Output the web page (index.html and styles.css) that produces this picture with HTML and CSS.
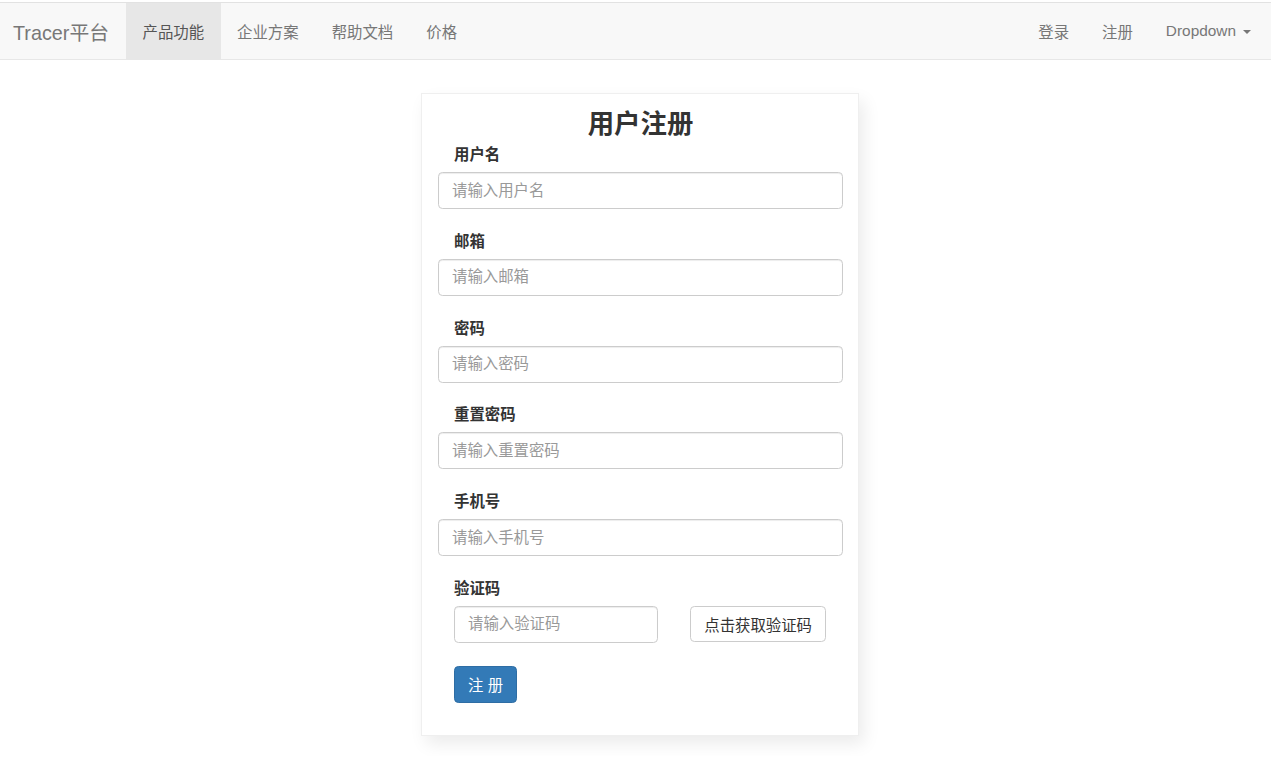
FILE: index.html
```html
<!DOCTYPE html>
<html lang="zh">
<head>
<meta charset="utf-8">
<title>用户注册 - Tracer平台</title>
<link rel="stylesheet" href="styles.css">
</head>
<body>
<nav class="navbar">
  <div class="nav-left">
    <a class="brand" href="#">Tracer平台</a>
    <a class="nav-item active" href="#">产品功能</a>
    <a class="nav-item" href="#">企业方案</a>
    <a class="nav-item" href="#">帮助文档</a>
    <a class="nav-item" href="#">价格</a>
  </div>
  <div class="nav-right">
    <a class="nav-item" href="#">登录</a>
    <a class="nav-item" href="#">注册</a>
    <a class="nav-item" href="#">Dropdown <span class="caret"></span></a>
  </div>
</nav>

<main class="page">
  <div class="card">
    <h3 class="title">用户注册</h3>
    <form class="form">
      <div class="group">
        <label class="label">用户名</label>
        <input class="input" type="text" placeholder="请输入用户名">
      </div>
      <div class="group">
        <label class="label">邮箱</label>
        <input class="input" type="text" placeholder="请输入邮箱">
      </div>
      <div class="group">
        <label class="label">密码</label>
        <input class="input" type="password" placeholder="请输入密码">
      </div>
      <div class="group">
        <label class="label">重置密码</label>
        <input class="input" type="password" placeholder="请输入重置密码">
      </div>
      <div class="group">
        <label class="label">手机号</label>
        <input class="input" type="text" placeholder="请输入手机号">
      </div>
      <div class="group group-code">
        <label class="label">验证码</label>
        <div class="code-row">
          <div class="col-7"><input class="input" type="text" placeholder="请输入验证码"></div>
          <div class="col-5"><button class="btn btn-default" type="button">点击获取验证码</button></div>
        </div>
      </div>
      <div class="submit-row">
        <button class="btn btn-primary" type="button">注 册</button>
      </div>
    </form>
  </div>
</main>
</body>
</html>
```

FILE: styles.css
```css
* { box-sizing: border-box; }

html, body {
  margin: 0;
  padding: 0;
  background: #fff;
  color: #333;
  font-family: "Liberation Sans", "Noto Sans CJK SC", Arial, sans-serif;
  font-size: 15.4px;
}

a { text-decoration: none; }

.navbar {
  margin-top: 2px;
  height: 58px;
  background: #f8f8f8;
  border-top: 1px solid #e2e2e2;
  border-bottom: 1px solid #e7e7e7;
  display: flex;
  justify-content: space-between;
  align-items: stretch;
}

.nav-left, .nav-right {
  display: flex;
  align-items: stretch;
}

.brand {
  width: 126px;
  padding-left: 13px;
  display: flex;
  align-items: center;
  color: #777;
  font-size: 19.8px;
  white-space: nowrap;
}

.nav-item {
  display: flex;
  align-items: center;
  padding: 0 16.5px;
  color: #777;
  white-space: nowrap;
}

.nav-item.active {
  background: #e7e7e7;
  color: #555;
}

.nav-right .nav-item:last-child {
  padding-right: 20px;
}

.caret {
  display: inline-block;
  width: 0;
  height: 0;
  margin-left: 7px;
  margin-top: 2px;
  border-top: 4.4px solid #777;
  border-left: 4.4px solid transparent;
  border-right: 4.4px solid transparent;
}

.page {
  display: flex;
  justify-content: center;
  padding-top: 33px;
  padding-left: 9px;
  padding-bottom: 20px;
}

.card {
  width: 438px;
  background: #fff;
  border: 1px solid #efefef;
  box-shadow: 5px 8px 16px rgba(0, 0, 0, 0.08);
  padding: 16px 15px 32px 16px;
}

.title {
  margin: 0 0 5px 0;
  text-align: center;
  font-size: 26.4px;
  line-height: 29px;
  font-weight: bold;
  color: #333;
}

.form { display: block; }

.group {
  margin-bottom: 21.75px;
}

.label {
  display: block;
  padding-left: 16px;
  height: 22px;
  line-height: 22px;
  margin-bottom: 6px;
  font-weight: bold;
  color: #333;
}

.input {
  display: block;
  width: 100%;
  height: 37px;
  padding: 0 13px;
  font-family: inherit;
  font-size: 15.4px;
  color: #555;
  background: #fff;
  border: 1px solid #ccc;
  border-radius: 4.4px;
  box-shadow: inset 0 1px 1px rgba(0, 0, 0, 0.075);
  outline: none;
}

.input::placeholder { color: #999; }

.group-code { margin-bottom: 23px; }

.code-row {
  display: flex;
}

.col-7 {
  width: 58.3333%;
  padding: 0 16px;
}

.col-5 {
  width: 41.6667%;
  padding: 0 16px;
}

.btn {
  display: inline-flex;
  align-items: center;
  justify-content: center;
  height: 37px;
  padding: 0 13px;
  font-family: inherit;
  font-size: 15.4px;
  border-radius: 4.4px;
  border: 1px solid transparent;
  white-space: nowrap;
  cursor: pointer;
}

.btn-default {
  height: 36px;
  background: #fff;
  color: #333;
  border-color: #ccc;
}

.btn-primary {
  background: #337ab7;
  color: #fff;
  border-color: #2e6da4;
}

.submit-row {
  padding-left: 16px;
}
```
